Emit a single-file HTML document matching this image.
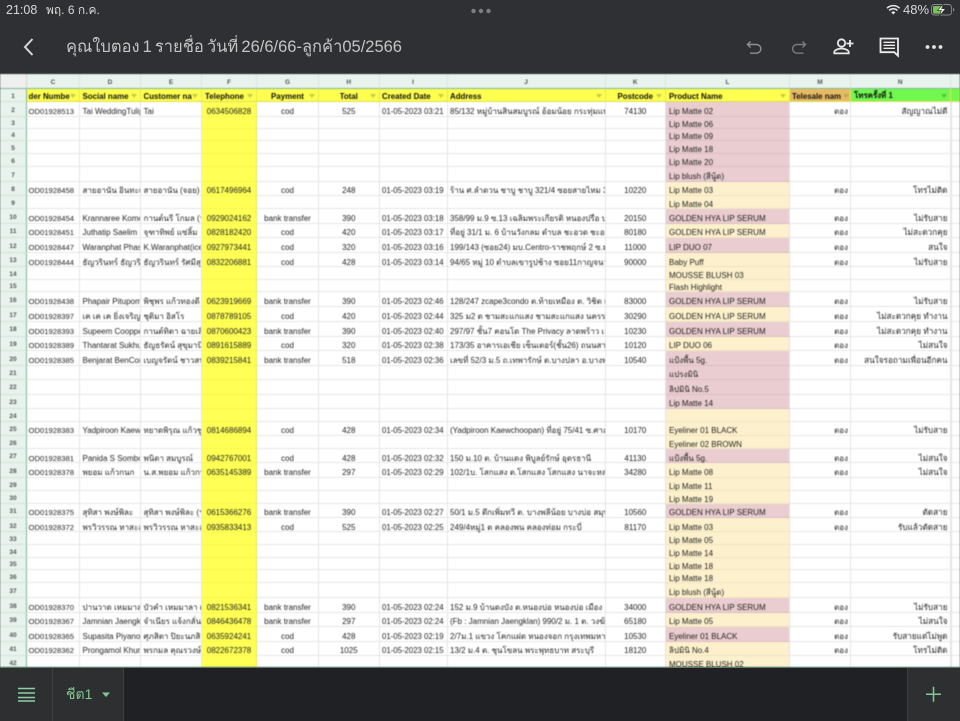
<!DOCTYPE html>
<html lang="th"><head><meta charset="utf-8"><title>Sheet</title>
<style>
*{box-sizing:border-box}
html,body{margin:0;padding:0;width:960px;height:720px;overflow:hidden;background:#202124;font-family:"Liberation Sans","Noto Sans CJK SC",sans-serif}
#top{position:absolute;left:0;top:0;width:960px;height:74px;background:#2f3033}
.st{position:absolute;top:2px;font-size:12.5px;color:#d8d8d8;line-height:16px;white-space:nowrap}
#title{position:absolute;left:66px;top:34px;font-size:16.5px;word-spacing:-1.5px;line-height:26px;color:#c4c4c4;white-space:nowrap}
#top svg{position:absolute;overflow:visible}
#sheet{position:absolute;left:0;top:74px;width:960px;height:593px;overflow:hidden;background:#fff;filter:blur(.45px);color:#1f1f1f;font-size:8px}
.r{display:flex;width:960px}
.r>i{font-style:normal;flex:none;display:flex;align-items:center;overflow-x:clip;overflow-y:visible;white-space:nowrap;border-right:1px solid #e4e4e4;border-bottom:1px solid #e6e6e6;padding-left:2.5px;padding-top:5px!important}
.r>i:nth-child(1){width:27px;background:#e7f3ec;color:#555;font-size:6.5px;font-weight:bold;justify-content:center;padding:0;border-right:1px solid #7fb596;border-bottom-color:#d5e3da;padding-top:2.5px!important}
.r>i:nth-child(2){width:53px;padding-left:1.5px;font-size:7.65px}
.r>i:nth-child(3){width:61px}
.r>i:nth-child(4){width:61px}
.r>i:nth-child(5){width:55px;background:#ffff55;justify-content:center;padding:0;border-right:1px solid #e8e85a;border-bottom-color:#f6f652}
.r>i:nth-child(6){width:62px;justify-content:center;padding:0}
.r>i:nth-child(7){width:60.5px;justify-content:center;padding:0}
.r>i:nth-child(8){width:68px;font-size:7.8px}
.r>i:nth-child(9){width:158px}
.r>i:nth-child(10){width:60.5px;justify-content:center;padding:0}
.r>i:nth-child(11){width:124px;padding-left:3px}
.r>i:nth-child(12){width:61px;justify-content:flex-end;padding:0 2px 0 0}
.r>i:nth-child(13){width:99.5px;justify-content:flex-end;padding:0 2px 0 0;font-size:8.2px}
.r>i:nth-child(14){width:9.5px;padding:0;border-left:1px solid #dfe9e3;border-right:0}
.r>i.p{background:#eacdd0;border-bottom-color:#dcbcc0}
.r>i.c{background:#fdf1cd;border-bottom-color:#efe3c0}
.ch>i:nth-child(n){background:#e7f3ec;color:#555;font-size:6.5px;font-weight:bold;justify-content:center;padding:0;padding-top:2.5px!important;border-right:1px solid #d9e5de;border-left:0;border-bottom:1px solid #7fb596}
.ch>i:nth-child(1){background:#efefef;border-right:1px solid #d5d5d5}
.hd>i:nth-child(n){position:relative;overflow:hidden;padding-top:2.5px!important;background:#ffff4f;color:#111;font-weight:bold;font-size:7.9px;border-right:1px solid #e6e65a;border-bottom:1px solid #dddd55;border-left:0}
.hd>i:nth-child(1){background:#e7f3ec;color:#555;font-size:6.5px;border-right:1px solid #7fb596;border-bottom-color:#d5e3da}
.hd>i:nth-child(12){background:#e8bb63;justify-content:flex-start;padding:0 0 0 2px}
.hd>i:nth-child(13){background:#70f84e;justify-content:flex-start;padding:0 0 0 3px}
.hd>i:nth-child(14){background:#70f84e}
.hd>i:nth-child(5){justify-content:flex-start;padding-left:3px}
.hd>i:nth-child(n+2):not(:nth-child(14))::after{content:"";position:absolute;right:3px;top:5px;width:0;height:0;border-left:3.5px solid transparent;border-right:3.5px solid transparent;border-top:4px solid #c6cb48}
.hd>i:nth-child(12)::after{border-top-color:#b9a94e!important;right:1.5px!important}
.hd>i:nth-child(13)::after{border-top-color:#58c23e!important}
.t{display:block;overflow:hidden;max-width:calc(100% - 9px)}
.hd>i:nth-child(6) .t,.hd>i:nth-child(7) .t,.hd>i:nth-child(10) .t{max-width:none}
#bot{position:absolute;left:0;top:667px;width:960px;height:53px;background:#202124;border-top:1px solid #5a7e68}
.pn{position:absolute;top:0;height:53px;background:#2d2f31}
#tab{position:absolute;left:66px;top:14px;font-size:14px;line-height:24px;color:#81c995;white-space:nowrap;filter:blur(.3px)}
#bot svg{position:absolute;overflow:visible}
</style></head><body>
<div id="top">
<div class="st" style="left:6px">21:08</div>
<div class="st" style="left:46px;font-size:12px">พฤ. 6 ก.ค.</div>
<svg style="left:0;top:0" width="960" height="74">
<g fill="#7d7e80"><circle cx="473.5" cy="11" r="2.2"/><circle cx="481" cy="11" r="2.2"/><circle cx="488.5" cy="11" r="2.2"/></g>
<path d="M32.5 39L25 47l7.5 8" fill="none" stroke="#d8d8d8" stroke-width="2"/>
<path d="M887 8.2a9 9 0 0 1 12.6 0M889.2 10.5a5.8 5.8 0 0 1 8.2 0" fill="none" stroke="#e6e6e6" stroke-width="1.5"/><path d="M891.2 12.2a3 3 0 0 1 4.2 0L893.3 14.5z" fill="#e6e6e6"/>
<rect x="931.5" y="4.5" width="20" height="10.5" rx="2.8" fill="none" stroke="#8b8c8e" stroke-width=".9"/>
<rect x="933" y="6" width="9.6" height="7.6" rx="1.2" fill="#76c453"/>
<path d="M953 8v3.5c1-.3 1.3-1 1.3-1.7S954 8.300 953 8z" fill="#8b8c8e"/>
<path d="M943.500 3.500L937.500 10.300h3.800L939.500 16l6-7.300h-3.800z" fill="#f0f0f0" stroke="#2f3033" stroke-width=".6"/>
<path d="M750.500 41.500L747.500 44.500l3 3M748 44.500h8.500a4.300 4.300 0 0 1 0 8.700H750" fill="none" stroke="#8e8f91" stroke-width="1.400"/>
<path d="M802.500 41.500L805.500 44.500l-3 3M805 44.500h-8a4.300 4.300 0 0 0 0 8.700h6.500" fill="none" stroke="#7b7c7e" stroke-width="1.400"/>
<circle cx="841.500" cy="43" r="3.700" fill="none" stroke="#e8e8e8" stroke-width="1.800"/>
<path d="M834.300 53.400v-1.200c0-2.400 4.800-3.700 7.200-3.700s7.200 1.300 7.200 3.700v1.200z" fill="none" stroke="#e8e8e8" stroke-width="1.800"/>
<path d="M850 40v7M846.500 43.500h7" stroke="#e8e8e8" stroke-width="1.800"/>
<path d="M880.500 38.500h17.500v17.200l-3.800-3.500h-13.700z" fill="none" stroke="#ececec" stroke-width="1.800"/>
<path d="M883.500 42.300h11.500M883.500 45.300h11.500M883.500 48.300h11.500" stroke="#ececec" stroke-width="1.400"/>
<g fill="#e4e4e4"><circle cx="927.500" cy="47" r="1.900"/><circle cx="934" cy="47" r="1.900"/><circle cx="940.500" cy="47" r="1.900"/></g>
</svg>
<div class="st" style="left:903px;font-size:13px">48%</div>
<div id="title">คุณใบตอง 1 รายชื่อ วันที่ 26/6/66-ลูกค้า05/2566</div>
</div>
<div id="sheet">
<div class="r ch" style="height:14.500px"><i></i><i>C</i><i>D</i><i>E</i><i>F</i><i>G</i><i>H</i><i>I</i><i>J</i><i>K</i><i>L</i><i>M</i><i>N</i><i></i></div>
<div class="r hd" style="height:13.500px"><i>1</i><i><span class="t">der Number</span></i><i><span class="t">Social name</span></i><i><span class="t">Customer name</span></i><i><span class="t">Telephone</span></i><i><span class="t">Payment</span></i><i><span class="t">Total</span></i><i><span class="t">Created Date</span></i><i><span class="t">Address</span></i><i><span class="t">Postcode</span></i><i><span class="t">Product Name</span></i><i><span class="t">Telesale name</span></i><i><span class="t">โทรครั้งที่ 1</span></i><i></i></div>
<div class="r" style="height:14.500px"><i>2</i><i>OD01928513</i><i>Tai WeddingTulip</i><i>Tai</i><i>0634506828</i><i>cod</i><i>525</i><i>01-05-2023 03:21</i><i>85/132 หมู่บ้านสินสมบูรณ์ อ้อมน้อย กระทุ่มแบน</i><i>74130</i><i class="p">Lip Matte 02</i><i>ตอง</i><i>สัญญาณไม่ดี</i><i></i></div>
<div class="r" style="height:12.200px"><i>3</i><i></i><i></i><i></i><i></i><i></i><i></i><i></i><i></i><i></i><i class="p">Lip Matte 06</i><i></i><i></i><i></i></div>
<div class="r" style="height:12.600px"><i>4</i><i></i><i></i><i></i><i></i><i></i><i></i><i></i><i></i><i></i><i class="p">Lip Matte 09</i><i></i><i></i><i></i></div>
<div class="r" style="height:13px"><i>5</i><i></i><i></i><i></i><i></i><i></i><i></i><i></i><i></i><i></i><i class="p">Lip Matte 18</i><i></i><i></i><i></i></div>
<div class="r" style="height:12.700px"><i>6</i><i></i><i></i><i></i><i></i><i></i><i></i><i></i><i></i><i></i><i class="p">Lip Matte 20</i><i></i><i></i><i></i></div>
<div class="r" style="height:14.700px"><i>7</i><i></i><i></i><i></i><i></i><i></i><i></i><i></i><i></i><i></i><i class="p">Lip blush (สีนู้ด)</i><i></i><i></i><i></i></div>
<div class="r" style="height:14.600px"><i>8</i><i>OD01928458</i><i>สายอานัน อินทะเ</i><i>สายอานัน (จอย)</i><i>0617496964</i><i>cod</i><i>248</i><i>01-05-2023 03:19</i><i>ร้าน ศ.ลำดวน ชาบู ชาบู 321/4 ซอยสายไหม 3</i><i>10220</i><i class="c">Lip Matte 03</i><i>ตอง</i><i>โทรไม่ติด</i><i></i></div>
<div class="r" style="height:12.700px"><i>9</i><i></i><i></i><i></i><i></i><i></i><i></i><i></i><i></i><i></i><i class="c">Lip Matte 04</i><i></i><i></i><i></i></div>
<div class="r" style="height:14.700px"><i>10</i><i>OD01928454</i><i>Krannaree Komol</i><i>กานต์นรี โกมล (ฯ</i><i>0929024162</i><i>bank transfer</i><i>390</i><i>01-05-2023 03:18</i><i>358/99 ม.9 ซ.13 เฉลิมพระเกียรติ หนองปรือ บ</i><i>20150</i><i class="p">GOLDEN HYA LIP SERUM</i><i>ตอง</i><i>ไม่รับสาย</i><i></i></div>
<div class="r" style="height:14.600px"><i>11</i><i>OD01928451</i><i>Juthatip Saelim</i><i>จุฑาทิพย์ แซ่ลิ้ม</i><i>0828182420</i><i>cod</i><i>420</i><i>01-05-2023 03:17</i><i>ที่อยู่ 31/1 ม. 6 บ้านวังกลม ตำบล ชะอวด ชะอวด</i><i>80180</i><i class="c">GOLDEN HYA LIP SERUM</i><i>ตอง</i><i>ไม่สะดวกคุย</i><i></i></div>
<div class="r" style="height:14.700px"><i>12</i><i>OD01928447</i><i>Waranphat Phasi</i><i>K.Waranphat(ice)</i><i>0927973441</i><i>cod</i><i>320</i><i>01-05-2023 03:16</i><i>199/143 (ซอย24) มบ.Centro-ราชพฤกษ์ 2 ซ.ม</i><i>11000</i><i class="p">LIP DUO 07</i><i>ตอง</i><i>สนใจ</i><i></i></div>
<div class="r" style="height:14.300px"><i>13</i><i>OD01928444</i><i>ธัญวรินทร์ ธัญวริ</i><i>ธัญวรินทร์ รัศมีสุข</i><i>0832206881</i><i>cod</i><i>428</i><i>01-05-2023 03:14</i><i>94/65 หมู่ 10 ตำบลเขารูปช้าง ซอย11กาญจนา</i><i>90000</i><i class="c">Baby Puff</i><i>ตอง</i><i>ไม่รับสาย</i><i></i></div>
<div class="r" style="height:12.400px"><i>14</i><i></i><i></i><i></i><i></i><i></i><i></i><i></i><i></i><i></i><i class="c">MOUSSE BLUSH 03</i><i></i><i></i><i></i></div>
<div class="r" style="height:12.600px"><i>15</i><i></i><i></i><i></i><i></i><i></i><i></i><i></i><i></i><i></i><i class="c">Flash Highlight</i><i></i><i></i><i></i></div>
<div class="r" style="height:15px"><i>16</i><i>OD01928438</i><i>Phapair Pitupom</i><i>พิชุพร แก้วทองดี</i><i>0623919669</i><i>bank transfer</i><i>390</i><i>01-05-2023 02:46</i><i>128/247 zcape3condo ต.ท้ายเหมือง ต. วิชิต เ</i><i>83000</i><i class="p">GOLDEN HYA LIP SERUM</i><i>ตอง</i><i>ไม่รับสาย</i><i></i></div>
<div class="r" style="height:14.700px"><i>17</i><i>OD01928397</i><i>เค เค เค ยิ่งเจริญ</i><i>ชุติมา อิสโร</i><i>0878789105</i><i>cod</i><i>420</i><i>01-05-2023 02:44</i><i>325 ม2 ต ชามสะแกแสง ชามสะแกแสง นครราชสีมา</i><i>30290</i><i class="c">GOLDEN HYA LIP SERUM</i><i>ตอง</i><i>ไม่สะดวกคุย ทำงาน</i><i></i></div>
<div class="r" style="height:14.700px"><i>18</i><i>OD01928393</i><i>Supeem Cooppee</i><i>กานต์ทิตา ฉายเลิศ</i><i>0870600423</i><i>bank transfer</i><i>390</i><i>01-05-2023 02:40</i><i>297/97 ชั้น7 คอนโด The Privacy ลาดพร้าว เส</i><i>10230</i><i class="p">GOLDEN HYA LIP SERUM</i><i>ตอง</i><i>ไม่สะดวกคุย ทำงาน</i><i></i></div>
<div class="r" style="height:14.600px"><i>19</i><i>OD01928389</i><i>Thantarat Sukhum</i><i>ธัญธรัตน์ สุขุมานิ</i><i>0891615889</i><i>cod</i><i>320</i><i>01-05-2023 02:38</i><i>173/35 อาคารเอเชีย เซ็นเตอร์(ชั้น26) ถนนสาทร</i><i>10120</i><i class="c">LIP DUO 06</i><i>ตอง</i><i>ไม่สนใจ</i><i></i></div>
<div class="r" style="height:14.400px"><i>20</i><i>OD01928385</i><i>Benjarat BenCom</i><i>เบญจรัตน์ ชาวสน</i><i>0839215841</i><i>bank transfer</i><i>518</i><i>01-05-2023 02:36</i><i>เลขที่ 52/3 ม.5 ถ.เทพารักษ์ ต.บางปลา อ.บางพลี</i><i>10540</i><i class="p">แป้งพื้น 5g.</i><i>ตอง</i><i>สนใจรอถามเพื่อนอีกคน</i><i></i></div>
<div class="r" style="height:14.300px"><i>21</i><i></i><i></i><i></i><i></i><i></i><i></i><i></i><i></i><i></i><i class="p">แปรงมินิ</i><i></i><i></i><i></i></div>
<div class="r" style="height:14.700px"><i>22</i><i></i><i></i><i></i><i></i><i></i><i></i><i></i><i></i><i></i><i class="p">ลิปมินิ No.5</i><i></i><i></i><i></i></div>
<div class="r" style="height:14.600px"><i>23</i><i></i><i></i><i></i><i></i><i></i><i></i><i></i><i></i><i></i><i class="p">Lip Matte 14</i><i></i><i></i><i></i></div>
<div class="r" style="height:12.400px"><i>24</i><i></i><i></i><i></i><i></i><i></i><i></i><i></i><i></i><i></i><i class="c"></i><i></i><i></i><i></i></div>
<div class="r" style="height:14.600px"><i>25</i><i>OD01928383</i><i>Yadpiroon Kaewc</i><i>หยาดพิรุณ แก้วชู</i><i>0814686894</i><i>cod</i><i>428</i><i>01-05-2023 02:34</i><i>(Yadpiroon Kaewchoopan) ที่อยู่ 75/41 ซ.ศาล</i><i>10170</i><i class="c">Eyeliner 01 BLACK</i><i>ตอง</i><i>ไม่รับสาย</i><i></i></div>
<div class="r" style="height:12.700px"><i>26</i><i></i><i></i><i></i><i></i><i></i><i></i><i></i><i></i><i></i><i class="c">Eyeliner 02 BROWN</i><i></i><i></i><i></i></div>
<div class="r" style="height:14.700px"><i>27</i><i>OD01928381</i><i>Panida S Somboo</i><i>พนิดา สมบูรณ์</i><i>0942767001</i><i>cod</i><i>428</i><i>01-05-2023 02:32</i><i>150 ม.10 ต. บ้านแดง พิบูลย์รักษ์ อุดรธานี</i><i>41130</i><i class="p">แป้งพื้น 5g.</i><i>ตอง</i><i>ไม่สนใจ</i><i></i></div>
<div class="r" style="height:14.600px"><i>28</i><i>OD01928378</i><i>พยอม แก้วกนก</i><i>น.ส.พยอม แก้วกนก</i><i>0635145389</i><i>bank transfer</i><i>297</i><i>01-05-2023 02:29</i><i>102/1บ. โสกแสง ต.โสกแสง โสกแสง นาจะหลวย</i><i>34280</i><i class="c">Lip Matte 08</i><i>ตอง</i><i>ไม่สนใจ</i><i></i></div>
<div class="r" style="height:12.700px"><i>29</i><i></i><i></i><i></i><i></i><i></i><i></i><i></i><i></i><i></i><i class="c">Lip Matte 11</i><i></i><i></i><i></i></div>
<div class="r" style="height:13px"><i>30</i><i></i><i></i><i></i><i></i><i></i><i></i><i></i><i></i><i></i><i class="c">Lip Matte 19</i><i></i><i></i><i></i></div>
<div class="r" style="height:14.300px"><i>31</i><i>OD01928375</i><i>สุทิสา พงษ์พิละ</i><i>สุทิสา พงษ์พิละ (ฯ</i><i>0615366276</i><i>bank transfer</i><i>390</i><i>01-05-2023 02:27</i><i>50/1 ม.5 ตึกเพิ่มทวี ต. บางพลีน้อย บางบ่อ สมุทร</i><i>10560</i><i class="p">GOLDEN HYA LIP SERUM</i><i>ตอง</i><i>ตัดสาย</i><i></i></div>
<div class="r" style="height:14.400px"><i>32</i><i>OD01928372</i><i>พรวิวรรณ หาสะอ</i><i>พรวิวรรณ หาสะอ</i><i>0935833413</i><i>cod</i><i>525</i><i>01-05-2023 02:25</i><i>249/4หมู่1 ต คลองพน คลองท่อม กระบี่</i><i>81170</i><i class="c">Lip Matte 03</i><i>ตอง</i><i>รับแล้วตัดสาย</i><i></i></div>
<div class="r" style="height:12.600px"><i>33</i><i></i><i></i><i></i><i></i><i></i><i></i><i></i><i></i><i></i><i class="c">Lip Matte 05</i><i></i><i></i><i></i></div>
<div class="r" style="height:12.700px"><i>34</i><i></i><i></i><i></i><i></i><i></i><i></i><i></i><i></i><i></i><i class="c">Lip Matte 14</i><i></i><i></i><i></i></div>
<div class="r" style="height:12.700px"><i>35</i><i></i><i></i><i></i><i></i><i></i><i></i><i></i><i></i><i></i><i class="c">Lip Matte 18</i><i></i><i></i><i></i></div>
<div class="r" style="height:12.600px"><i>36</i><i></i><i></i><i></i><i></i><i></i><i></i><i></i><i></i><i></i><i class="c">Lip Matte 18</i><i></i><i></i><i></i></div>
<div class="r" style="height:15px"><i>37</i><i></i><i></i><i></i><i></i><i></i><i></i><i></i><i></i><i></i><i class="c">Lip blush (สีนู้ด)</i><i></i><i></i><i></i></div>
<div class="r" style="height:14.700px"><i>38</i><i>OD01928370</i><i>ปานวาด เหมมาล</i><i>บัวคำ เหมมาลา (</i><i>0821536341</i><i>bank transfer</i><i>390</i><i>01-05-2023 02:24</i><i>152 ม.9 บ้านดงบัง ต.หนองบ่อ หนองบ่อ เมือง</i><i>34000</i><i class="p">GOLDEN HYA LIP SERUM</i><i>ตอง</i><i>ไม่รับสาย</i><i></i></div>
<div class="r" style="height:14.300px"><i>39</i><i>OD01928367</i><i>Jamnian Jaengkla</i><i>จำเนียร แจ้งกลั่น</i><i>0846436478</i><i>bank transfer</i><i>297</i><i>01-05-2023 02:24</i><i>(Fb : Jamnian Jaengklan) 990/2 ม. 1 ต. วงฆ้อง</i><i>65180</i><i class="c">Lip Matte 05</i><i>ตอง</i><i>ไม่สนใจ</i><i></i></div>
<div class="r" style="height:14.700px"><i>40</i><i>OD01928365</i><i>Supasita Piyanop</i><i>ศุภสิตา ปิยะนภสิ</i><i>0635924241</i><i>cod</i><i>428</i><i>01-05-2023 02:19</i><i>2/7ม.1 แขวง โคกแฝด หนองจอก กรุงเทพมหา</i><i>10530</i><i class="p">Eyeliner 01 BLACK</i><i>ตอง</i><i>รับสายแต่ไม่พูด</i><i></i></div>
<div class="r" style="height:14.300px"><i>41</i><i>OD01928362</i><i>Prongamol Khun</i><i>พรกมล คุณรวงษ์</i><i>0822672378</i><i>cod</i><i>1025</i><i>01-05-2023 02:15</i><i>13/2 ม.4 ต. ชุนโขลน พระพุทธบาท สระบุรี</i><i>18120</i><i class="c">ลิปมินิ No.4</i><i>ตอง</i><i>โทรไม่ติด</i><i></i></div>
<div class="r" style="height:12.700px"><i>42</i><i></i><i></i><i></i><i></i><i></i><i></i><i></i><i></i><i></i><i class="c">MOUSSE BLUSH 02</i><i></i><i></i><i></i></div>
</div>
<div id="bot">
<div class="pn" style="left:0;width:124px;border-right:1px solid #3d3f41"></div>
<div class="pn" style="left:52px;width:1px;background:#3d3f41"></div>
<div class="pn" style="left:907px;width:53px;border-left:1px solid #3d3f41"></div>
<svg style="left:0;top:0" width="960" height="53">
<path d="M18 20.500h17M18 25h17M18 29.500h17M18 33h17" stroke="#8fcfa2" stroke-width="1.500"/>
<path d="M102 24.500h8l-4 4.500z" fill="#81c995"/>
<path d="M933.500 18.800v15M926 26.300h15" stroke="#81c995" stroke-width="1.500"/>
</svg>
<div id="tab">ชีต1</div>
</div>
</body></html>
